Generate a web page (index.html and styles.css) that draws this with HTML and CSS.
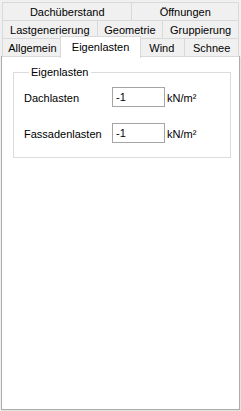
FILE: index.html
```html
<!DOCTYPE html>
<html lang="de">
<head>
    <meta charset="UTF-8">
    <meta name="viewport" content="width=device-width, initial-scale=1.0">
    <title>Eigenlasten</title>
    <link rel="stylesheet" href="styles.css">
</head>
<body>
    <div class="tabs">
        <div class="tab-row">
            <div class="tab w131">Dachüberstand</div>
            <div class="tab w108">Öffnungen</div>
        </div>
        <div class="tab-row">
            <div class="tab w96">Lastgenerierung</div>
            <div class="tab w67">Geometrie</div>
            <div class="tab w77">Gruppierung</div>
        </div>
        <div class="tab-row">
            <div class="tab w61">Allgemein</div>
            <div class="tab active">Eigenlasten</div>
            <div class="tab w47">Wind</div>
            <div class="tab w55">Schnee</div>
        </div>
    </div>

    <div class="panel">
        <fieldset class="group">
            <legend>Eigenlasten</legend>
            <div class="field">
                <label>Dachlasten</label>
                <input type="text" value="-1">
                <span class="unit">kN/m²</span>
            </div>
            <div class="field">
                <label>Fassadenlasten</label>
                <input type="text" value="-1">
                <span class="unit">kN/m²</span>
            </div>
        </fieldset>
    </div>
</body>
</html>
```

FILE: styles.css
```css
body {
    margin: 0;
    background-color: #f0f0f0;
    font-family: 'Liberation Sans', Arial, sans-serif;
    font-size: 11px;
    color: #000;
    width: 241px;
    height: 411px;
    overflow: hidden;
}

/* Reiter */
.tabs {
    padding: 2px 2px 0 2px;
}

.tab-row {
    display: flex;
    height: 19px;
    margin-top: -1px;
}

.tab-row:first-child {
    margin-top: 0;
}

.tab {
    box-sizing: border-box;
    height: 19px;
    border: 1px solid #d9d9d9;
    background-color: #f0f0f0;
    margin-left: -1px;
    display: flex;
    justify-content: center;
    align-items: center;
    padding-top: 1px;
    white-space: nowrap;
}

.tab:first-child {
    margin-left: 0;
}

.w131 { width: 131px; }
.w108 { width: 108px; }
.w96 { width: 96px; }
.w67 { width: 67px; }
.w77 { width: 77px; }
.w61 { width: 61px; }
.w47 { width: 47px; }
.w55 { width: 55px; }

.tab.active {
    position: relative;
    z-index: 2;
    width: 82px;
    height: 22px;
    margin: -2px -2px 0 -3px;
    background-color: #fff;
    border-bottom: none;
    padding-top: 0;
    padding-bottom: 2px;
}

/* Inhalt */
.panel {
    box-sizing: border-box;
    height: 354px;
    margin: -1px 1px 0 1px;
    background-color: #fff;
    border: 1px solid #acacac;
    box-shadow: 1px 1px 0 #e3e3e3;
    padding: 9px 8px 0 11px;
}

.group {
    margin: 0;
    border: 1px solid #dcdcdc;
    padding: 8px 10px 14px 10px;
    display: flex;
    flex-direction: column;
    gap: 16px;
}

.group legend {
    font-size: 11px;
    line-height: 13px;
    padding: 0 2px;
    margin-left: 5px;
}

.field {
    display: flex;
    align-items: center;
    height: 20px;
}

.field label {
    width: 88px;
    padding-top: 1px;
}

.field input {
    box-sizing: border-box;
    width: 53px;
    height: 20px;
    margin: 0;
    border: 1px solid #a5a5a5;
    padding: 0 3px;
    font-family: 'Liberation Sans', Arial, sans-serif;
    font-size: 11px;
    color: #000;
    outline: none;
}

.unit {
    margin-left: 2px;
    padding-top: 1px;
}
```
